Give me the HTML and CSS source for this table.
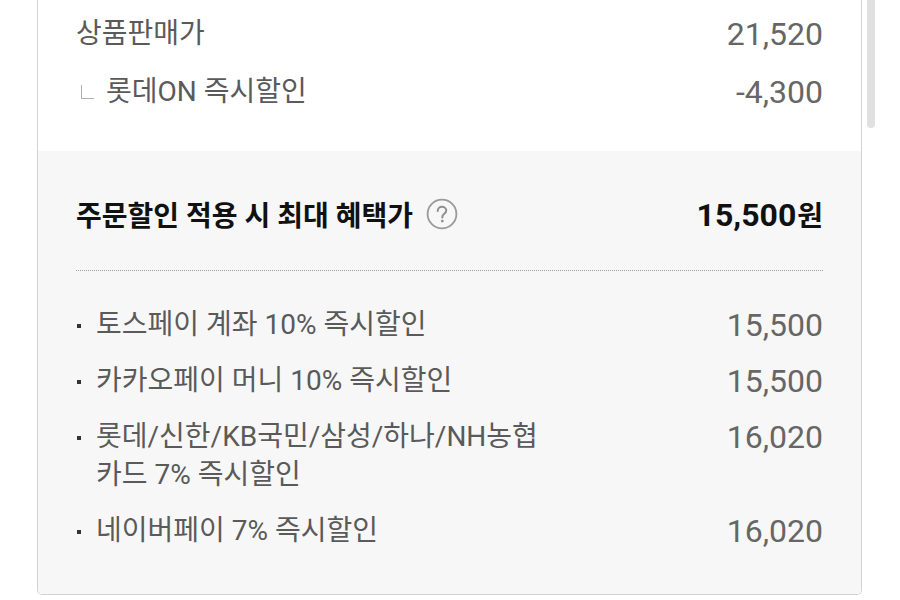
FILE: index.html
```html
<!DOCTYPE html>
<html lang="ko">
<head>
<meta charset="utf-8">
<title>혜택가</title>
<link rel="stylesheet" href="styles.css">
</head>
<body>
<div class="page">
  <div class="card">
    <div class="top">
      <div class="row">
        <span class="label">상품판매가</span>
        <span class="amount">21,520</span>
      </div>
      <div class="row">
        <span class="label"><span class="corner"></span>롯데ON 즉시할인</span>
        <span class="amount">-4,300</span>
      </div>
    </div>
    <div class="benefit">
      <div class="title-row">
        <span class="title">주문할인 적용 시 최대 혜택가
          <span class="help"><svg width="32" height="32" viewBox="0 0 30 30"><circle cx="15" cy="15" r="13.5" fill="none" stroke="#9a9a9a" stroke-width="1.7"/><path d="M11 12.2c0-2.4 1.8-3.9 4-3.9s4 1.5 4 3.5c0 1.6-1 2.4-2.1 3.2-1.1.8-1.6 1.4-1.6 2.7v.6" fill="none" stroke="#8f8f8f" stroke-width="1.9" stroke-linecap="round"/><circle cx="15.3" cy="21.6" r="1.3" fill="#8f8f8f"/></svg></span>
        </span>
        <span class="total">15,500<span class="won">원</span></span>
      </div>
      <div class="dots"></div>
      <ul class="list">
        <li class="item"><span class="label bullet">토스페이 계좌 10% 즉시할인</span><span class="amount">15,500</span></li>
        <li class="item"><span class="label bullet">카카오페이 머니 10% 즉시할인</span><span class="amount">15,500</span></li>
        <li class="item"><span class="label bullet">롯데/신한/KB국민/삼성/하나/NH농협<br>카드 7% 즉시할인</span><span class="amount">16,020</span></li>
        <li class="item"><span class="label bullet">네이버페이 7% 즉시할인</span><span class="amount">16,020</span></li>
      </ul>
    </div>
  </div>
  <div class="scroll-thumb"></div>
</div>
</body>
</html>
```
FILE: styles.css
```css
* { box-sizing: border-box; }
html, body { margin: 0; padding: 0; background: #fff; }
body { font-family: Roboto, "Noto Sans CJK KR", sans-serif; color: #666; }
.page { position: relative; width: 900px; height: 600px; overflow: hidden; }
.card {
  margin-left: 37px;
  width: 825px;
  border: 1.5px solid #d2d2d2;
  border-top: none;
  border-radius: 0 0 5px 5px;
  overflow: hidden;
}
.top { background: #fff; padding: 5px 38px 30px 38px; }
.row { display: flex; justify-content: space-between; align-items: center; height: 58px; }
.label { font-size: 28px; line-height: 38px; color: #5a5a5a; display: flex; align-items: center; }
.amount { font-size: 32px; line-height: 38px; color: #666; font-family: Roboto, sans-serif; }
.corner {
  display: inline-block;
  width: 13px; height: 14px;
  border-left: 1.5px solid #b0b0b0;
  border-bottom: 1.5px solid #b0b0b0;
  margin: 0 12px 0 5px;
}
.benefit { background: #f7f7f7; padding: 35px 38px 44px 38px; }
.title-row { display: flex; justify-content: space-between; align-items: center; height: 56px; }
.title { font-size: 28px; font-weight: 700; color: #111; display: flex; align-items: center; }
.help { display: inline-flex; margin-left: 13px; }
.total { font-family: Roboto, sans-serif; font-size: 32px; font-weight: 700; color: #111; display: flex; align-items: baseline; }
.won { font-family: "Noto Sans CJK KR", sans-serif; font-size: 28px; font-weight: 700; margin-left: 1px; }
.dots { border-top: 1px dotted #a0a0a0; margin-top: 28px; }
.list { list-style: none; margin: 35px 0 0 0; padding: 0; display: flex; flex-direction: column; gap: 18px; }
.item { display: flex; justify-content: space-between; align-items: flex-start; }
.bullet { display: block; position: relative; padding-left: 20px; }
.bullet::before {
  content: "";
  position: absolute;
  left: 1px; top: 18px;
  width: 4px; height: 4px;
  background: #333;
}
.scroll-thumb {
  position: absolute;
  left: 867px; top: 0;
  width: 8px; height: 128px;
  background: #e0e0e0;
  border-radius: 0 0 4px 4px;
}
```
